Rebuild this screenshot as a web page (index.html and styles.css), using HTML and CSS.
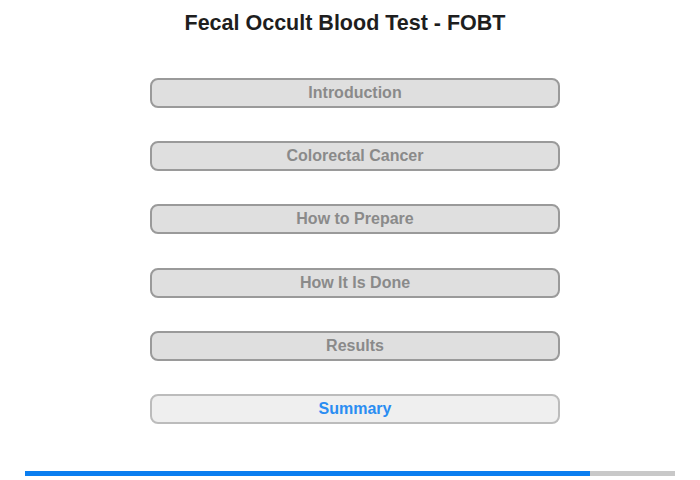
FILE: index.html
```html
<!DOCTYPE html>
<html>
<head>
<meta charset="utf-8">
<link rel="stylesheet" href="styles.css">
</head>
<body>
<div class="page">
  <h1 class="title">Fecal Occult Blood Test - FOBT</h1>
  <nav class="menu">
    <div class="item">Introduction</div>
    <div class="item">Colorectal Cancer</div>
    <div class="item">How to Prepare</div>
    <div class="item">How It Is Done</div>
    <div class="item">Results</div>
    <div class="item current">Summary</div>
  </nav>
  <div class="progress"><div class="fill" style="width:565px"></div></div>
</div>
</body>
</html>
```
FILE: styles.css
```css
html, body { margin: 0; padding: 0; background: #fff; }
.page {
  width: 700px; height: 480px;
  font-family: "Liberation Sans", Arial, sans-serif;
  display: flex; flex-direction: column;
}
.title {
  margin: 10px 0 0 0;
  font-size: 21.5px; font-weight: bold; color: #1e1e1e;
  line-height: 26px;
  text-align: center;
  width: 690px;
}
.menu {
  margin: 42px 0 0 150px;
  display: flex; flex-direction: column; gap: 33.2px;
}
.item {
  box-sizing: border-box;
  width: 410px; height: 30px;
  border: 2px solid #9a9a9a;
  border-radius: 8px;
  background: #dfdfdf;
  color: #8a8a8a;
  font-size: 16px;
  font-weight: bold;
  line-height: 26px;
  text-align: center;
}
.item.current {
  background: #efefef;
  border-color: #bcbcbc;
  color: #2a8df2;
}
.progress {
  margin: 47px 0 0 25px;
  width: 650px; height: 5px;
  background: #c8c8c8;
}
.fill { height: 100%; background: #0a7ef0; }
```
